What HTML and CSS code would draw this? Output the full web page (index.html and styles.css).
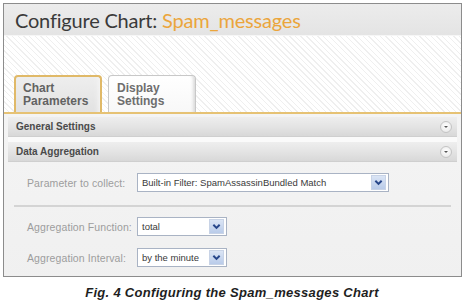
FILE: index.html
```html
<!DOCTYPE html>
<html>
<head>
<meta charset="utf-8">
<link rel="stylesheet" href="styles.css">
</head>
<body>
<div class="frame">
  <div class="header">
    <h1 class="title">Configure Chart: <span class="name">Spam_messages</span></h1>
  </div>
  <div class="hatch">
    <div class="tabs">
      <div class="tab active">Chart<br>Parameters</div>
      <div class="tab">Display<br>Settings</div>
    </div>
  </div>
  <div class="panel">
    <div class="bar"><span>General Settings</span><i class="toggle"></i></div>
    <div class="bar second"><span>Data Aggregation</span><i class="toggle"></i></div>
    <div class="body">
      <div class="row first">
        <label class="lbl">Parameter to collect:</label>
        <div class="select wide"><span>Built-in Filter: SpamAssassinBundled Match</span><b class="arrow"><svg viewBox="0 0 10 10" width="9" height="9"><path d="M1.5 3 L5 6.5 L8.5 3" fill="none" stroke="#27468a" stroke-width="2.2"/></svg></b></div>
      </div>
      <div class="sep"></div>
      <div class="row">
        <label class="lbl">Aggregation Function:</label>
        <div class="select narrow"><span>total</span><b class="arrow"><svg viewBox="0 0 10 10" width="9" height="9"><path d="M1.5 3 L5 6.5 L8.5 3" fill="none" stroke="#27468a" stroke-width="2.2"/></svg></b></div>
      </div>
      <div class="row">
        <label class="lbl">Aggregation Interval:</label>
        <div class="select narrow"><span>by the minute</span><b class="arrow"><svg viewBox="0 0 10 10" width="9" height="9"><path d="M1.5 3 L5 6.5 L8.5 3" fill="none" stroke="#27468a" stroke-width="2.2"/></svg></b></div>
      </div>
      <div class="sep bottom"></div>
    </div>
  </div>
</div>
<p class="caption">Fig. 4 Configuring the Spam_messages Chart</p>
</body>
</html>
```
FILE: styles.css
```css
html, body {
  margin: 0;
  padding: 0;
  background: #ffffff;
}
body {
  width: 464px;
  height: 306px;
  overflow: hidden;
  font-family: "Liberation Sans", Arial, sans-serif;
}
.frame {
  margin: 3px 0 0 3px;
  width: 457px;
  height: 272px;
  border: 1px solid #8c8c8c;
  background: #f0f0f0;
  display: flex;
  flex-direction: column;
  overflow: hidden;
}
.header {
  flex-shrink: 0;
  height: 31px;
  background: linear-gradient(#ececec, #e4e4e4);
  border-bottom: 1px solid #f6f6f6;
  display: flex;
  align-items: center;
  padding-left: 11px;
}
.title {
  margin: 0;
  font-family: Lato, "Open Sans", sans-serif;
  font-weight: normal;
  font-size: 20px;
  color: #3a3a3a;
  letter-spacing: -0.2px;
}
.name {
  color: #eba53c;
}
.hatch {
  flex-shrink: 0;
  height: 76px;
  background-color: #ffffff;
  background-image: repeating-linear-gradient(45deg, #ffffff 0px, #ffffff 3px, #efefef 3px, #efefef 4px);
  display: flex;
  align-items: flex-end;
  border-bottom: 2px solid #e6c274;
}
.tabs {
  display: flex;
  gap: 6px;
  padding-left: 10px;
}
.tab {
  width: 78px;
  height: 30px;
  padding: 6px 0 0 8px;
  border: 1px solid #c8c8c8;
  border-bottom: none;
  border-radius: 4px 4px 0 0;
  background: linear-gradient(#ffffff, #f8f8f8);
  box-shadow: inset -4px 0 3px -2px #dcdcdc;
  font-size: 12px;
  font-weight: bold;
  line-height: 13px;
  color: #6e6e6e;
}
.tab.active {
  border: 2px solid #e0b968;
  border-bottom: none;
  width: 77px;
  padding: 5px 0 0 7px;
  background: linear-gradient(#eeeeee, #e2e2e2);
  box-shadow: inset -5px 0 4px -3px #f4f4f4;
  color: #626262;
}
.panel {
  flex: 1;
  display: flex;
  flex-direction: column;
  padding: 3px 4px 0 4px;
  background: linear-gradient(#f4f4f4, #f0f0f0);
}
.bar {
  flex-shrink: 0;
  height: 19px;
  display: flex;
  align-items: center;
  justify-content: space-between;
  padding: 0 5px 0 8px;
  background: linear-gradient(#eeeeee 0%, #e4e4e4 50%, #d8d8d8 100%);
  border-bottom: 1px solid #cfcfcf;
  font-size: 10px;
  font-weight: bold;
  color: #4a4a4a;
}
.bar.second {
  margin-top: 5px;
  box-shadow: 0 -5px 0 #fafafa;
}
.toggle {
  width: 10px;
  height: 10px;
  border-radius: 50%;
  border: 1px solid #c4c4c4;
  background: radial-gradient(circle at 50% 40%, #ffffff 0%, #ececec 70%, #d6d6d6 100%);
  position: relative;
}
.toggle::after {
  content: "";
  position: absolute;
  left: 3px;
  top: 4px;
  border-left: 2px solid transparent;
  border-right: 2px solid transparent;
  border-top: 2px solid #555555;
}
.body {
  flex: 1;
  padding: 11px 6px 0 6px;
  display: flex;
  flex-direction: column;
}
.row {
  flex-shrink: 0;
  display: flex;
  align-items: center;
  height: 19px;
  padding-left: 13px;
  margin-bottom: 12px;
}
.row.first {
  margin-bottom: 13px;
}
.lbl {
  width: 110px;
  font-size: 10.5px;
  color: #9d9d9d;
  letter-spacing: 0.1px;
}
.select {
  height: 17px;
  border: 1px solid #a9b3c4;
  background: #ffffff;
  display: flex;
  align-items: center;
  justify-content: space-between;
  padding-left: 4px;
  font-size: 9.5px;
  color: #3a3a3a;
  box-sizing: content-box;
}
.select.wide {
  width: 246px;
}
.select.narrow {
  width: 84px;
}
.arrow {
  width: 13px;
  height: 13px;
  margin-right: 2px;
  background: linear-gradient(#dbe5f5, #b9cbe9);
  border: 1px solid #c8d3e6;
  display: flex;
  align-items: center;
  justify-content: center;
}
.sep {
  flex-shrink: 0;
  height: 2px;
  background: #d4d4d4;
  margin: 0 0 10px 0;
}
.sep.bottom {
  margin: auto 0 2px 0;
  background: #dcdcdc;
}
.caption {
  margin: 8px 0 0 0;
  text-align: center;
  font-weight: bold;
  font-style: italic;
  font-size: 13px;
  letter-spacing: 0.3px;
  color: #1e1e1e;
}
```
